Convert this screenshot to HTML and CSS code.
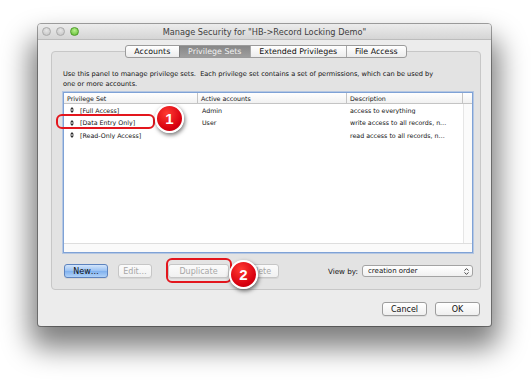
FILE: index.html
```html
<!DOCTYPE html>
<html lang="en">
<head>
  <meta charset="UTF-8" />
  <title>Manage Security</title>
  <link rel="stylesheet" href="styles.css">
</head>
<body>
  <div class="window">
    <div class="titlebar">
      <div class="lights">
        <span class="light"></span>
        <span class="light"></span>
        <span class="light zoom"></span>
      </div>
      <div class="title">Manage Security for "HB-&gt;Record Locking Demo"</div>
    </div>

    <div class="content">
      <div class="tabs">
        <span class="tab">Accounts</span>
        <span class="tab active">Privilege Sets</span>
        <span class="tab">Extended Privileges</span>
        <span class="tab">File Access</span>
      </div>

      <div class="panel">
        <p class="intro">Use this panel to manage privilege sets.&nbsp; Each privilege set contains a set of permissions, which can be used by<br>one or more accounts.</p>

        <div class="list">
          <div class="list-head">
            <div class="col c1">Privilege Set</div>
            <div class="col c2">Active accounts</div>
            <div class="col c3">Description</div>
            <div class="corner"></div>
          </div>
          <div class="list-main">
            <div class="rows">
              <div class="row">
                <div class="col c1"><svg class="grip" width="4" height="6" viewBox="0 0 4 6"><path d="M2 0L4 2.4H0Z M0 3.6H4L2 6Z"/></svg>[Full Access]</div>
                <div class="col c2">Admin</div>
                <div class="col c3">access to everything</div>
              </div>
              <div class="row">
                <div class="col c1"><svg class="grip" width="4" height="6" viewBox="0 0 4 6"><path d="M2 0L4 2.4H0Z M0 3.6H4L2 6Z"/></svg>[Data Entry Only]</div>
                <div class="col c2">User</div>
                <div class="col c3">write access to all records, n…</div>
              </div>
              <div class="row">
                <div class="col c1"><svg class="grip" width="4" height="6" viewBox="0 0 4 6"><path d="M2 0L4 2.4H0Z M0 3.6H4L2 6Z"/></svg>[Read-Only Access]</div>
                <div class="col c2"></div>
                <div class="col c3">read access to all records, n…</div>
              </div>
            </div>
            <div class="vscroll"></div>
          </div>
          <div class="hscroll"></div>
        </div>

        <div class="actions">
          <button class="btn default w-new">New…</button>
          <button class="btn disabled w-edit">Edit…</button>
          <button class="btn disabled w-dup">Duplicate</button>
          <button class="btn disabled w-del">Delete</button>
          <span class="view-label">View by:</span>
          <div class="popup">
            <span>creation order</span>
            <svg width="5" height="7" viewBox="0 0 5 7"><path d="M0.5 2.6L2.5 0.6L4.5 2.6 M0.5 4.4L2.5 6.4L4.5 4.4" fill="none" stroke="#333" stroke-width="0.9"/></svg>
          </div>
        </div>
      </div>

      <div class="footer">
        <button class="btn w-foot">Cancel</button>
        <button class="btn w-foot">OK</button>
      </div>
    </div>

    <div class="mark-box mark-box-1"></div>
    <div class="mark-num mark-num-1">1</div>
    <div class="mark-box mark-box-2"></div>
    <div class="mark-num mark-num-2">2</div>
  </div>
</body>
</html>
```

FILE: styles.css
```css
* {
  box-sizing: border-box;
}
html {
  background: #fff;
}
body {
  margin: 0;
  height: 380px;
  padding: 23px 0 0 37px;
  font-family: "DejaVu Sans", sans-serif;
  color: #111;
}
.window {
  position: relative;
  z-index: 0;
  width: 455px;
  height: 304px;
  background: #ececec;
  border: 1px solid #a6a6a6;
  border-radius: 4px 4px 3px 3px;
  display: flex;
  flex-direction: column;
}
/* soft drop shadow under the dialog */
.window::before {
  content: "";
  position: absolute;
  z-index: -1;
  left: -8px;
  right: -8px;
  top: 14px;
  bottom: -22px;
  border-radius: 14px;
  background: rgba(0, 0, 0, 0.5);
  filter: blur(14px);
}

/* title bar */
.titlebar {
  height: 16px;
  display: grid;
  grid-template-columns: 1fr auto 1fr;
  align-items: center;
  padding: 0 4px;
  background: linear-gradient(#ececec, #d5d5d5);
  border-bottom: 1px solid #bcbcbc;
  border-radius: 3px 3px 0 0;
}
.lights {
  display: flex;
  gap: 5px;
}
.light {
  width: 9px;
  height: 9px;
  border-radius: 50%;
  border: 1px solid #aaa;
  background: radial-gradient(circle at 50% 35%, #e6e6e6, #c2c2c2);
}
.light.zoom {
  border-color: #4f9b2c;
  background: radial-gradient(circle at 50% 35%, #b8f08e, #5cba2b);
}
.title {
  font-size: 8.2px;
  color: #404040;
  white-space: nowrap;
}

/* content */
.content {
  flex: 1;
  padding: 5px 10px 0 13px;
  display: flex;
  flex-direction: column;
  background: #ececec;
  border-radius: 0 0 3px 3px;
}
.tabs {
  position: relative;
  z-index: 1;
  align-self: center;
  display: flex;
  height: 13px;
  margin-bottom: -7px;
  border: 1px solid #9b9b9b;
  border-radius: 3px;
  background: linear-gradient(#ffffff, #ececec);
  overflow: hidden;
}
.tab {
  display: flex;
  align-items: center;
  padding: 0 8.4px;
  font-size: 7.9px;
  color: #111;
  border-left: 1px solid #a9a9a9;
}
.tab:first-child {
  border-left: none;
}
.tab.active {
  background: linear-gradient(#878787, #9e9e9e);
  color: #f2f2f2;
  border-left-color: #7d7d7d;
}
.panel {
  height: 239px;
  border: 1px solid #c7c7c7;
  border-radius: 4px;
  background: #e3e3e3;
  padding: 17px 7px 11px 11px;
  display: flex;
  flex-direction: column;
}
.intro {
  margin: 0 0 3px;
  font-size: 6.6px;
  line-height: 10px;
  white-space: nowrap;
}

/* list */
.list {
  height: 161px;
  background: #fff;
  border: 1px solid #7fa2d6;
  box-shadow: 0 0 0 1px rgba(125, 165, 225, 0.45);
  display: flex;
  flex-direction: column;
}
.list-head {
  height: 11px;
  display: flex;
  background: linear-gradient(#ffffff, #f1f1f1);
  border-bottom: 1px solid #c4c4c4;
  font-size: 6.3px;
}
.list-head .col {
  border-right: 1px solid #c4c4c4;
  padding-left: 3px;
  display: flex;
  align-items: center;
}
.corner {
  flex: 1;
}
.col {
  white-space: nowrap;
  overflow: hidden;
}
.c1 {
  width: 134px;
}
.c2 {
  width: 149px;
}
.c3 {
  width: 116px;
}
.list-main {
  flex: 1;
  display: flex;
}
.rows {
  flex: 1;
}
.vscroll {
  width: 9px;
  background: #fbfbfb;
  border-left: 1px solid #e6e6e6;
}
.hscroll {
  height: 9px;
  background: #fafafa;
  border-top: 1px solid #dedede;
}
.row {
  height: 12.5px;
  display: flex;
  align-items: center;
  font-size: 6.3px;
}
.row .c1 {
  padding-left: 6px;
  display: flex;
  align-items: center;
}
.row .c2 {
  padding-left: 4px;
}
.row .c3 {
  padding-left: 3px;
}
.grip {
  fill: #2a2a2a;
  margin-right: 6px;
  flex: none;
}

/* buttons */
.actions {
  margin-top: 11px;
  height: 14px;
  display: flex;
  align-items: center;
  padding-left: 1px;
}
.btn {
  height: 14px;
  padding: 0;
  border: 1px solid #9d9d9d;
  border-radius: 3px;
  background: linear-gradient(#ffffff, #efefef);
  font-family: "DejaVu Sans", sans-serif;
  font-size: 8px;
  color: #111;
  box-shadow: 0 1px 0 rgba(0, 0, 0, 0.06);
}
.btn.default {
  border-color: #5d83be;
  background: linear-gradient(#d3e5fb, #98c0f2 50%, #80b1ee 52%, #b0d1f7);
}
.btn.disabled {
  color: #a6a6a6;
  border-color: #c6c6c6;
  background: linear-gradient(#fbfbfb, #f1f1f1);
}
.w-new {
  width: 44px;
  margin-right: 10px;
}
.w-edit {
  width: 34px;
  margin-right: 16px;
}
.w-dup {
  width: 61px;
  margin-right: 8px;
}
.w-del {
  width: 42px;
}
.view-label {
  margin-left: auto;
  margin-right: 4px;
  font-size: 7.2px;
}
.popup {
  width: 111px;
  height: 12px;
  border: 1px solid #a3a3a3;
  border-radius: 3px;
  background: linear-gradient(#ffffff, #f0f0f0);
  display: flex;
  align-items: center;
  justify-content: space-between;
  padding: 0 3px 0 5px;
  font-size: 7px;
}
.footer {
  margin-top: 12px;
  display: flex;
  justify-content: flex-end;
  gap: 8px;
  padding-right: 1px;
}
.w-foot {
  width: 45px;
}

/* red callouts drawn over the dialog */
.mark-box {
  position: absolute;
  border: 2.5px solid #e3161d;
  border-radius: 6px;
}
.mark-box-1 {
  left: 18px;
  top: 90px;
  width: 99px;
  height: 15px;
}
.mark-box-2 {
  left: 128px;
  top: 234px;
  width: 66px;
  height: 25px;
}
.mark-num {
  position: absolute;
  width: 29px;
  height: 29px;
  border-radius: 50%;
  border: 2px solid #fff;
  background: radial-gradient(circle at 40% 30%, #ff3b33, #d8000f 65%, #b3000a);
  color: #fff;
  font: bold 15px "Liberation Sans", sans-serif;
  display: flex;
  align-items: center;
  justify-content: center;
  box-shadow: 1px 2px 4px rgba(0, 0, 0, 0.55);
}
.mark-num-1 {
  left: 117px;
  top: 80px;
}
.mark-num-2 {
  left: 191px;
  top: 236px;
}
```
